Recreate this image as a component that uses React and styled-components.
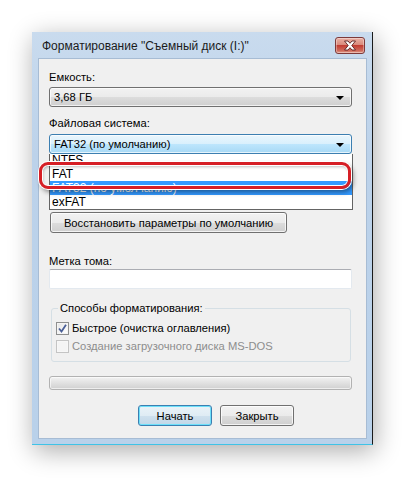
import React from 'react';
import styled, { createGlobalStyle, css } from 'styled-components';

const Global = createGlobalStyle`
  html, body { margin: 0; padding: 0; background: #fff; }
  body {
    font-family: "Liberation Sans", Arial, sans-serif;
    font-size: 11.2px;
    color: #000;
  }
  * { box-sizing: border-box; }
`;

const Page = styled.div`
  width: 407px;
  height: 478px;
  padding: 32px 0 0 32px;
  overflow: hidden;
`;

const Frame = styled.div`
  width: 341px;
  height: 413px;
  display: flex;
  flex-direction: column;
  padding: 0 5px 5px 6px;
  background: linear-gradient(#c9dbee, #bcd2ea 30%, #b9d1ea);
  border-right: 1px solid #1a1a1a;
  border-bottom: 1px solid #3fc3e6;
  box-shadow: 2px 6px 24px rgba(0, 0, 0, 0.33);
`;

const TitleBar = styled.div`
  height: 26px;
  display: flex;
  align-items: center;
  justify-content: space-between;
  padding: 1px 2px 0 4px;
`;

const Title = styled.div`
  font-size: 12px;
  color: #1b1b1b;
`;

const CloseBtn = styled.div`
  width: 30px;
  height: 17px;
  display: flex;
  align-items: center;
  justify-content: center;
  border: 1px solid #7d3a3a;
  border-radius: 3px;
  background: linear-gradient(#eab0a4, #d98a7c 45%, #c23d33 50%, #cf6b5c 85%, #e3a08f);
  box-shadow: inset 0 0 0 1px rgba(255, 255, 255, 0.35);
`;

const Client = styled.div`
  flex: 1;
  background: #f0f0f0;
  border: 1px solid #a7bcd4;
  padding: 11px 14px 0 10px;
  display: flex;
  flex-direction: column;
`;

const Label = styled.div`
  line-height: 15px;
  height: 15px;
  margin-top: ${p => p.$mt || 0}px;
`;

const ComboWrap = styled.div`
  position: relative;
  margin-top: ${p => p.$mt || 0}px;
`;

const Combo = styled.div`
  height: 20px;
  display: flex;
  align-items: center;
  justify-content: space-between;
  padding: 0 7px 0 4px;
  border: 1px solid ${p => (p.$focused ? '#3c7fb1' : '#707070')};
  border-radius: 3px;
  ${p =>
    p.$focused
      ? css`
          background: linear-gradient(#eaf6fd, #d9f0fc 50%, #bee6fd 50%, #a7d9f5);
        `
      : css`
          background: linear-gradient(#f2f2f2, #ebebeb 50%, #dddddd 50%, #cfcfcf);
        `}
  box-shadow: inset 0 0 0 1px rgba(255, 255, 255, 0.7);
`;

const Arrow = styled.span`
  width: 0;
  height: 0;
  border-left: 4px solid transparent;
  border-right: 4px solid transparent;
  border-top: 4px solid #000;
  margin-top: 1px;
`;

const List = styled.div`
  position: absolute;
  left: 0;
  right: -1px;
  top: 20px;
  height: 56px;
  background: #fff;
  border: 1px solid #646464;
  border-top: none;
  overflow: hidden;
  display: flex;
  flex-direction: column;
  justify-content: flex-end;
  z-index: 2;
`;

const Item = styled.div`
  height: 14px;
  flex: none;
  line-height: 14px;
  padding-left: 2px;
  font-size: 12px;
  color: ${p => (p.$selected ? '#fff' : '#000')};
  background: ${p => (p.$selected ? '#3399ff' : 'transparent')};
`;

const Ring = styled.div`
  position: absolute;
  left: -10px;
  top: 28px;
  width: 312px;
  height: 27px;
  border: 3px solid #d61f26;
  border-radius: 9px;
  box-shadow: 0 0 0 1px #fff, inset 0 0 0 1px #fff, 2px 3px 5px rgba(0, 0, 0, 0.45),
    inset 1px 2px 3px rgba(0, 0, 0, 0.25);
  z-index: 3;
`;

const Button = styled.div`
  height: 21px;
  display: flex;
  align-items: center;
  justify-content: center;
  border: 1px solid ${p => (p.$default ? '#3c7fb1' : '#707070')};
  border-radius: 3px;
  background: ${p =>
    p.$default
      ? 'linear-gradient(#eaf3f8, #dfecf4 50%, #cfe1ee 50%, #c0d7e8)'
      : 'linear-gradient(#f2f2f2, #ebebeb 50%, #dddddd 50%, #cfcfcf)'};
  box-shadow: inset 0 0 0 1px ${p => (p.$default ? '#6ce0fa' : 'rgba(255,255,255,0.75)')};
  width: ${p => p.$w}px;
  margin-top: ${p => p.$mt || 0}px;
  margin-left: ${p => p.$ml || 0}px;
`;

const TextBox = styled.div`
  height: 20px;
  background: #fff;
  border: 1px solid #e3e9ef;
  border-top-color: #abadb3;
  border-radius: 2px;
`;

const Group = styled.fieldset`
  margin: 12px 1px 0 2px;
  padding: 3px 4px 6px 4px;
  border: 1px solid #d5dfe5;
  border-radius: 3px;
  min-width: 0;
`;

const Legend = styled.legend`
  padding: 0 2px;
  margin-left: 2px;
  line-height: 15px;
`;

const CheckRow = styled.div`
  height: 18px;
  display: flex;
  align-items: center;
  gap: 3px;
  color: ${p => (p.$disabled ? '#8d8d8d' : '#000')};
`;

const Box = styled.span`
  width: 13px;
  height: 13px;
  flex: none;
  display: flex;
  align-items: center;
  justify-content: center;
  border: 1px solid ${p => (p.$disabled ? '#c4c4c4' : '#8e8f8f')};
  background: ${p =>
    p.$disabled ? '#f4f4f4' : 'linear-gradient(135deg, #e4e4e4, #f6f6f6 60%, #ffffff)'};
  box-shadow: inset 0 0 0 1px ${p => (p.$disabled ? '#f7f7f7' : '#f4f4f4')};
`;

const Progress = styled.div`
  height: 14px;
  margin-top: 14px;
  border: 1px solid #b2b2b2;
  border-radius: 3px;
  background: linear-gradient(#f3f3f3, #e6e6e6 35%, #dadada 70%, #d0d0d0);
  box-shadow: inset 0 0 0 1px rgba(255, 255, 255, 0.6);
`;

const ButtonRow = styled.div`
  display: flex;
  gap: 8px;
  margin-top: 15px;
  padding-left: 89px;
`;

export default function App() {
  return (
    <Page>
      <Global />
      <Frame>
        <TitleBar>
          <Title>Форматирование "Съемный диск (I:)"</Title>
          <CloseBtn>
            <svg width="14" height="11" viewBox="0 0 14 11">
              <path
                d="M1.5 1 H5 L7 3.3 L9 1 H12.5 L8.8 5.5 L12.5 10 H9 L7 7.7 L5 10 H1.5 L5.2 5.5 Z"
                fill="#fff"
                stroke="#5a2020"
                strokeWidth="0.9"
                strokeLinejoin="round"
              />
            </svg>
          </CloseBtn>
        </TitleBar>
        <Client>
          <Label>Емкость:</Label>
          <ComboWrap $mt={2}>
            <Combo>
              <span>3,68 ГБ</span>
              <Arrow />
            </Combo>
          </ComboWrap>

          <Label $mt={9}>Файловая система:</Label>
          <ComboWrap $mt={3}>
            <Combo $focused>
              <span>FAT32 (по умолчанию)</span>
              <Arrow />
            </Combo>
            <List>
              <Item>NTFS</Item>
              <Item>FAT</Item>
              <Item $selected>FAT32 (по умолчанию)</Item>
              <Item>exFAT</Item>
            </List>
            <Ring />
          </ComboWrap>

          <Label $mt={6}>Размер единицы распределения:</Label>
          <ComboWrap $mt={3}>
            <Combo>
              <span>32 килобайта</span>
              <Arrow />
            </Combo>
          </ComboWrap>

          <Button $w={237} $mt={14} $ml={1}>Восстановить параметры по умолчанию</Button>

          <Label $mt={21}>Метка тома:</Label>
          <TextBox />

          <Group>
            <Legend>Способы форматирования:</Legend>
            <CheckRow>
              <Box>
                <svg width="9" height="9" viewBox="0 0 9 9">
                  <path d="M1 4.5 L3.5 7.5 L8 0.8" fill="none" stroke="#4a5f97" strokeWidth="1.8" />
                </svg>
              </Box>
              <span>Быстрое (очистка оглавления)</span>
            </CheckRow>
            <CheckRow $disabled>
              <Box $disabled />
              <span>Создание загрузочного диска MS-DOS</span>
            </CheckRow>
          </Group>

          <Progress />

          <ButtonRow>
            <Button $w={74} $default>Начать</Button>
            <Button $w={74}>Закрыть</Button>
          </ButtonRow>
        </Client>
      </Frame>
    </Page>
  );
}
